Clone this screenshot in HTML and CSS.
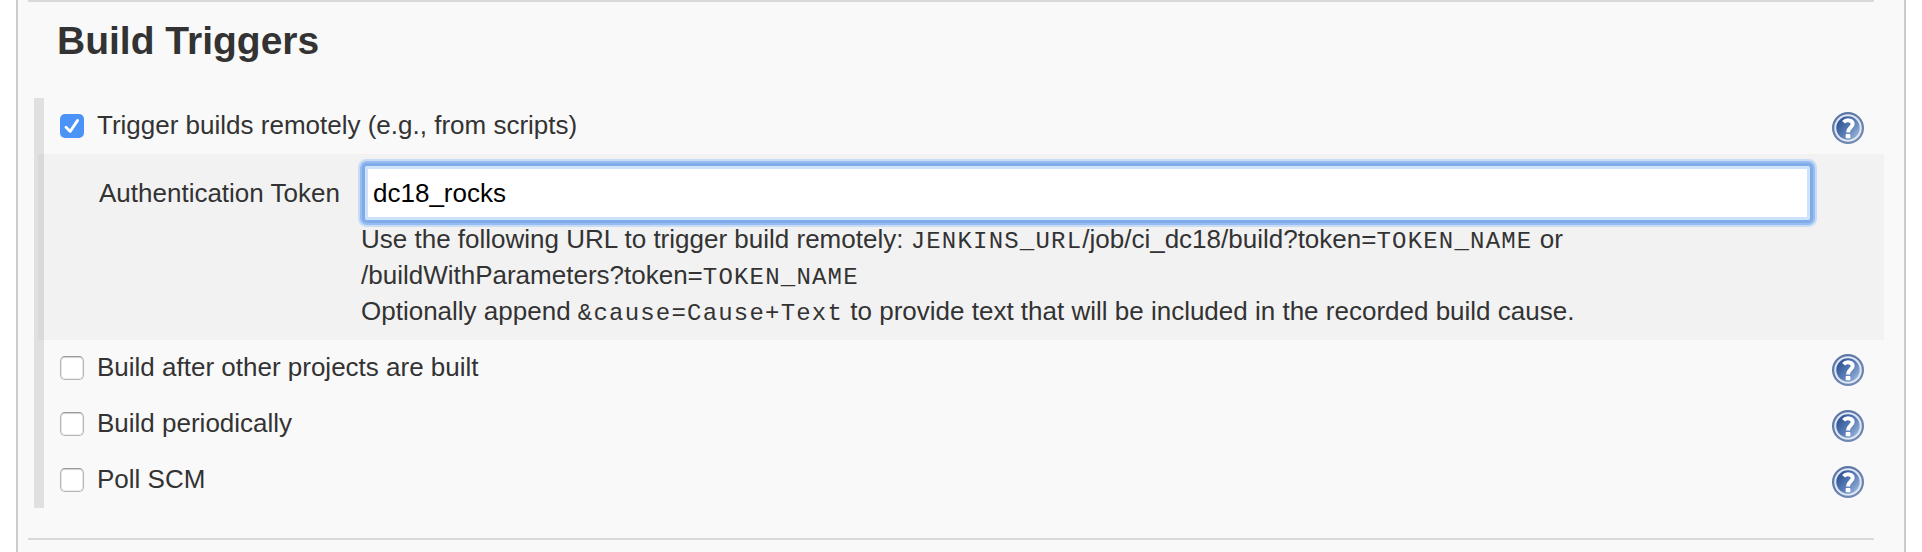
FILE: index.html
```html
<!DOCTYPE html>
<html lang="en">
<head>
<meta charset="utf-8">
<title>Build Triggers</title>
<link rel="stylesheet" href="styles.css">
</head>
<body>
<svg class="defs" aria-hidden="true">
  <defs>
    <linearGradient id="disc" x1="0" y1="0.1" x2="1" y2="0.9">
      <stop offset="0.15" stop-color="#34599a"/>
      <stop offset="0.55" stop-color="#5c7fb6"/>
      <stop offset="1" stop-color="#a3bcde"/>
    </linearGradient>
    <linearGradient id="rim" x1="0" y1="0" x2="0.6" y2="1">
      <stop offset="0" stop-color="#566f9f"/>
      <stop offset="1" stop-color="#7189b2"/>
    </linearGradient>
    <symbol id="help" viewBox="0 0 32 32">
      <circle cx="16" cy="16" r="16" fill="url(#rim)"/>
      <circle cx="16" cy="16" r="13.8" fill="#dce6f4"/>
      <circle cx="16" cy="16" r="11.7" fill="url(#disc)"/>
      <path d="M11.6 10.2C13.8 7.6 20.7 7.4 20.7 11.9C20.7 15.3 16 15.6 16 20.4" fill="none" stroke="#fff" stroke-width="4"/>
      <rect x="13.7" y="22" width="4.7" height="4.2" rx="0.8" fill="#fff"/>
    </symbol>
  </defs>
</svg>
<main class="panel">
  <hr class="rule">
  <h1 class="title">Build Triggers</h1>
  <section class="triggers">
    <div class="row">
      <span class="check checked"><svg viewBox="0 0 24 24"><path d="M6 13.2L10.2 17.4L17.6 6.4"/></svg></span>
      <span class="name">Trigger builds remotely (e.g., from scripts)</span>
      <svg class="help"><use href="#help"/></svg>
    </div>
    <div class="details">
      <label class="label" for="token">Authentication Token</label>
      <div class="field">
        <input class="token" id="token" type="text" value="dc18_rocks">
        <div class="hint">Use the following URL to trigger build remotely: <code>JENKINS_URL</code>/job/ci_dc18/build?token=<code>TOKEN_NAME</code> or<br>/buildWithParameters?token=<code>TOKEN_NAME</code><br>Optionally append <code>&amp;cause=Cause+Text</code> to provide text that will be included in the recorded build cause.</div>
      </div>
    </div>
    <div class="row">
      <span class="check"></span>
      <span class="name">Build after other projects are built</span>
      <svg class="help"><use href="#help"/></svg>
    </div>
    <div class="row">
      <span class="check"></span>
      <span class="name">Build periodically</span>
      <svg class="help"><use href="#help"/></svg>
    </div>
    <div class="row">
      <span class="check"></span>
      <span class="name">Poll SCM</span>
      <svg class="help"><use href="#help"/></svg>
    </div>
  </section>
  <hr class="rule">
</main>
</body>
</html>
```
FILE: styles.css
```css
* {
  box-sizing: border-box;
}

body {
  margin: 0;
  background: #fff;
  color: #333;
  font: 26px/36px "Liberation Sans", Helvetica, Arial, sans-serif;
  overflow: hidden;
}

.defs {
  display: block;
  width: 0;
  height: 0;
}

.panel {
  height: 552px;
  margin: 0 16px;
  width: 1890px;
  border: solid #ccc;
  border-width: 0 2px;
  background: #f9f9f9;
}

.rule {
  height: 2px;
  margin: 0 30px 0 10px;
  border: 0;
  background: #d9d9d9;
}

.title {
  margin: 0;
  padding: 15px 0 33px 39px;
  font-size: 39px;
  line-height: 48px;
  font-weight: bold;
}

.triggers {
  margin: 0 20px 30px 16px;
  border-left: 10px solid #e0e0e0;
}

.row {
  display: flex;
  align-items: flex-start;
  height: 56px;
  padding: 14px 20px 0 16px;
}

.check {
  width: 24px;
  height: 24px;
  margin-top: 2px;
  border: 1px solid #b4b4b4;
  border-top-color: #999;
  border-radius: 5px;
  background: #fff;
  box-shadow: inset 0 1px 1px #d4d4d4, inset 0 0 0 1px #ececec;
}

.checked {
  border: 0;
  background: #4b93f7;
  box-shadow: none;
}

.checked svg {
  display: block;
  fill: none;
  stroke: #fff;
  stroke-width: 2.8;
  stroke-linecap: round;
  stroke-linejoin: round;
}

.name {
  flex: 1;
  margin: -5px 0 0 13px;
  white-space: nowrap;
}

.help {
  width: 32px;
  height: 32px;
}

.details {
  display: flex;
  height: 186px;
  margin-left: -6px;
  padding: 7px 67px 0 61px;
  background: rgba(0, 0, 0, 0.027);
}

.label {
  width: 262px;
  margin-top: 14px;
  white-space: nowrap;
}

.field {
  flex: 1;
  white-space: nowrap;
}

.token {
  display: block;
  width: 1447px;
  height: 56px;
  margin: 4px 0 0 3px;
  padding: 1px 8px 0;
  border: 1px solid #80abe9;
  border-radius: 3px;
  outline: none;
  background: #fff;
  color: #000;
  font: inherit;
  box-shadow: inset 0 0 0 3px #cfe2fb, 0 0 0 2px #80abe9, 0 0 0 4px #97bcf1, 0 0 0 6px #c9dcf6;
}

.hint {
  position: relative;
}

code {
  font: 24px/1 "Liberation Mono", "Courier New", monospace;
  letter-spacing: 1.2px;
}
```
